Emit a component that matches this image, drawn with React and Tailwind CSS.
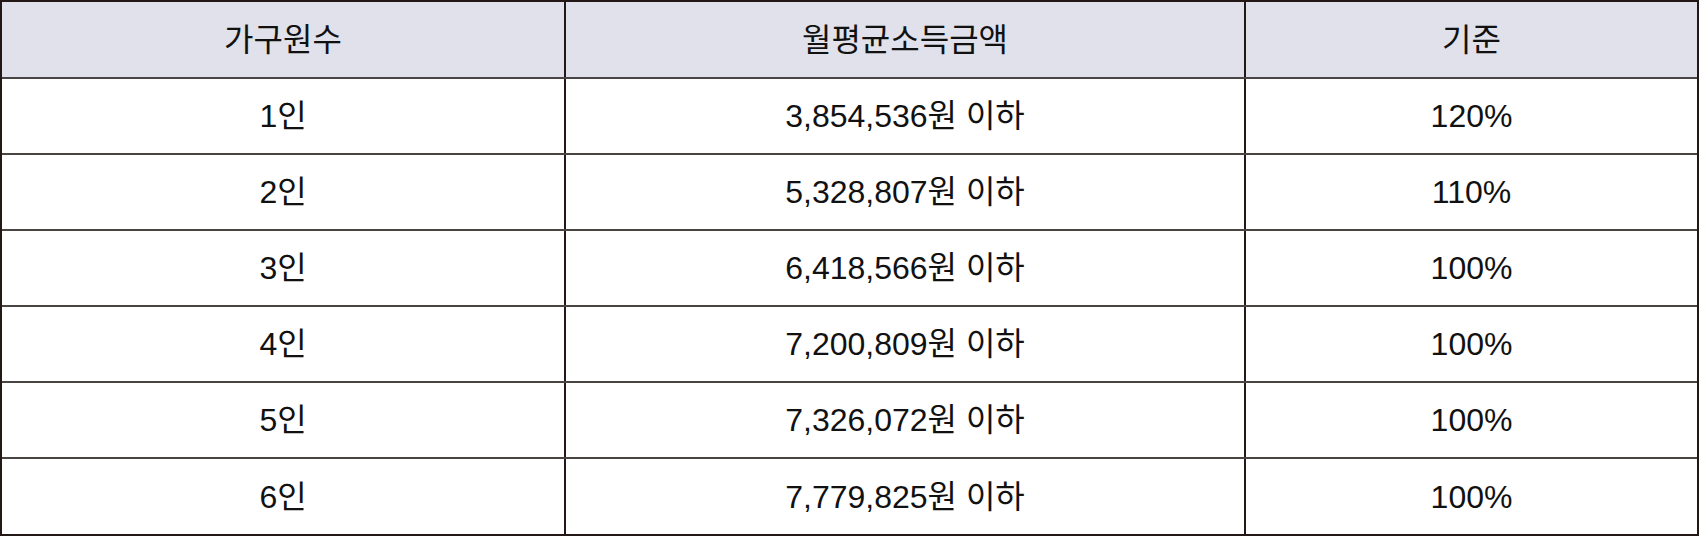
import React from "react";

const rows = [
  ["1인", "3,854,536원 이하", "120%"],
  ["2인", "5,328,807원 이하", "110%"],
  ["3인", "6,418,566원 이하", "100%"],
  ["4인", "7,200,809원 이하", "100%"],
  ["5인", "7,326,072원 이하", "100%"],
  ["6인", "7,779,825원 이하", "100%"],
];

function Row({ cells, header, last }) {
  return (
    <div
      className={
        "grid grid-cols-[564px_680px_1fr] " +
        (header ? "h-[77px] bg-[#e1e1eb] " : last ? "h-[75px] bg-white " : "h-[76px] bg-white ") +
        (last ? "" : "border-b-2 border-[#4a4543]")
      }
    >
      {cells.map((c, i) => (
        <div
          key={i}
          className={
            "flex items-center justify-center text-[32px] text-[#111] " +
            (i < 2 ? "border-r-2 border-[#231815]" : "")
          }
        >
          {c}
        </div>
      ))}
    </div>
  );
}

export default function App() {
  return (
    <div
      className="w-[1700px] h-[537px] bg-white"
      style={{ fontFamily: '"Liberation Sans", "Noto Sans CJK KR", sans-serif' }}
    >
      <div className="w-[1699px] border-2 border-[#231815]">
        <Row cells={["가구원수", "월평균소득금액", "기준"]} header />
        {rows.map((r, i) => (
          <Row key={i} cells={r} last={i === rows.length - 1} />
        ))}
      </div>
    </div>
  );
}
